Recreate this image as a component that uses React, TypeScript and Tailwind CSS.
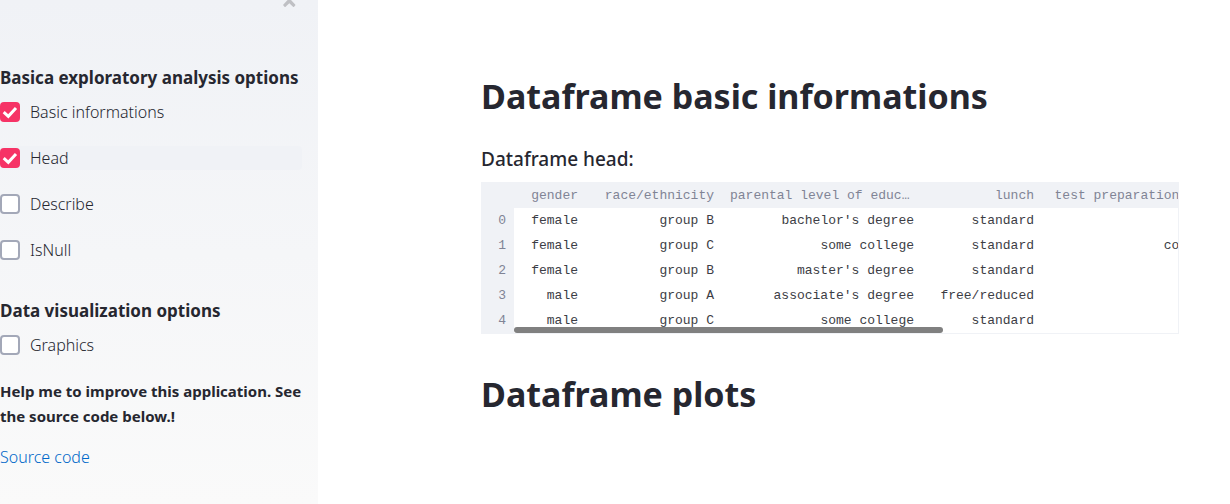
import { useState } from "react";

const columns = [
  { name: "gender", width: "w-[72px]" },
  { name: "race/ethnicity", width: "w-[136px]" },
  { name: "parental level of education", width: "w-[200px]" },
  { name: "lunch", width: "w-[120px]" },
  { name: "test preparation course", width: "w-[200px]" },
];

const rows = [
  ["female", "group B", "bachelor's degree", "standard", "none"],
  ["female", "group C", "some college", "standard", "completed"],
  ["female", "group B", "master's degree", "standard", "none"],
  ["male", "group A", "associate's degree", "free/reduced", "none"],
  ["male", "group C", "some college", "standard", "none"],
];

type CheckboxProps = { label: string; initial?: boolean; highlighted?: boolean };

function Checkbox({ label, initial = false, highlighted = false }: CheckboxProps) {
  const [checked, setChecked] = useState(initial);
  return (
    <label
      className={`flex h-6 items-center gap-2.5 rounded-sm text-base font-light ${
        highlighted ? "bg-[#f0f2f6]" : ""
      }`}
    >
      <span className="grid size-5 shrink-0">
        <input
          type="checkbox"
          checked={checked}
          onChange={(e) => setChecked(e.target.checked)}
          className="col-start-1 row-start-1 size-5 appearance-none rounded-sm border-2 border-[#a3a8b8] bg-white checked:border-[#f63366] checked:bg-[#f63366]"
        />
        {checked && (
          <svg
            viewBox="0 0 20 20"
            aria-hidden="true"
            className="pointer-events-none col-start-1 row-start-1 size-5 fill-none stroke-white stroke-3"
          >
            <path d="M3.7 10.2 8.3 14.3 16 6" />
          </svg>
        )}
      </span>
      {label}
    </label>
  );
}

function Sidebar() {
  return (
    <aside className="w-[318px] shrink-0 bg-linear-to-b from-[#f0f2f6] to-[#fafafa] pr-4">
      <div className="flex h-[66px] justify-end pr-1.5">
        <button type="button" aria-label="Close" className="h-2 w-3.5">
          <svg viewBox="0 0 14 8" className="h-2 w-3.5 fill-[#bfc0c4]">
            <path d="M5.6 0H9L13.2 4.4a.8.8 0 0 1 0 1.1L12.1 6.7a.8.8 0 0 1-1.1 0L7.3 3.2 3.6 6.7a.8.8 0 0 1-1.1 0L1.4 5.5a.8.8 0 0 1 0-1.1Z" />
          </svg>
        </button>
      </div>
      <h2 className="mb-2.5 text-[17px]/6 font-bold">Basica exploratory analysis options</h2>
      <div className="flex flex-col gap-[22px]">
        <Checkbox label="Basic informations" initial />
        <Checkbox label="Head" initial highlighted />
        <Checkbox label="Describe" />
        <Checkbox label="IsNull" />
      </div>
      <h2 className="mt-[37px] mb-2.5 text-[17px]/6 font-bold">Data visualization options</h2>
      <Checkbox label="Graphics" />
      <p className="mt-[22px] text-[15px]/[25px] font-bold">
        Help me to improve this application. See the source code below.!
      </p>
      <a href="#source" className="mt-4 block text-base/[25px] font-light text-[#0068c9]">
        Source code
      </a>
    </aside>
  );
}

function DataFrame() {
  return (
    <div className="relative h-[152px] overflow-hidden border border-[#f0f2f6]">
      <table className="w-[760px] table-fixed border-collapse text-right font-['Liberation_Mono',monospace] text-[13px]/[17px] whitespace-nowrap text-[#3c3d45]">
        <thead className="bg-[#f0f2f6] text-[#808495]">
          <tr className="h-[25px]">
            <th className="w-8" />
            {columns.map((c) => (
              <th key={c.name} scope="col" className={`${c.width} truncate px-2 font-normal`}>
                {c.name}
              </th>
            ))}
          </tr>
        </thead>
        <tbody>
          {rows.map((cells, i) => (
            <tr key={i} className="h-[25px]">
              <th scope="row" className="bg-[#f0f2f6] px-2 font-normal text-[#808495]">
                {i}
              </th>
              {cells.map((cell, j) => (
                <td key={j} className="px-2">
                  {cell}
                </td>
              ))}
            </tr>
          ))}
        </tbody>
      </table>
      <div className="absolute bottom-0 left-8 h-1.5 w-[429px] rounded-full bg-[#808080]" />
    </div>
  );
}

export default function App() {
  return (
    <div className="flex min-h-screen bg-white font-['Noto_Sans',sans-serif] text-[#262730]">
      <Sidebar />
      <main className="min-w-0 flex-1 pt-[72px] pr-[51px] pl-[163px]">
        <h1 className="text-[34px]/[48px] font-bold">Dataframe basic informations</h1>
        <h3 className="mt-[25px] mb-[9px] text-[19px]/7 font-medium">Dataframe head:</h3>
        <DataFrame />
        <h1 className="mt-9 text-[34px]/[48px] font-bold">Dataframe plots</h1>
      </main>
    </div>
  );
}
